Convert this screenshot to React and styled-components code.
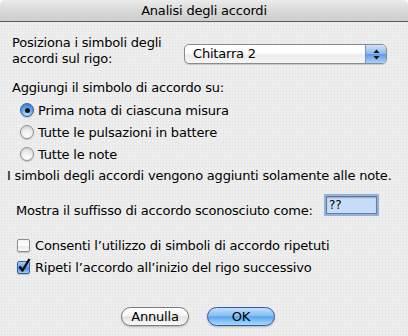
import styled, { createGlobalStyle } from "styled-components"

const GlobalStyle = createGlobalStyle`
    html, body {
        margin: 0;
        padding: 0;
        background: #ffffff;
    }
    body {
        font-family: "DejaVu Sans", "Liberation Sans", sans-serif;
        font-size: 13px;
        letter-spacing: -0.2px;
        color: #000;
    }
`

export default function App() {
    return (
        <>
            <GlobalStyle />
            <Window>
                <TitleBar>Analisi degli accordi</TitleBar>
                <Body>
                    <PositionRow>
                        <PositionLabel>
                            Posiziona i simboli degli<br />accordi sul rigo:
                        </PositionLabel>
                        <Popup>
                            <PopupText>Chitarra 2</PopupText>
                            <PopupArrows>
                                <svg width="7" height="11" viewBox="0 0 7 11">
                                    <path d="M3.5 0.5 L6.5 4 L0.5 4 Z" fill="#111" />
                                    <path d="M0.5 7 L6.5 7 L3.5 10.5 Z" fill="#111" />
                                </svg>
                            </PopupArrows>
                        </Popup>
                    </PositionRow>

                    <SectionLabel>Aggiungi il simbolo di accordo su:</SectionLabel>

                    <RadioGroup>
                        <OptionRow>
                            <Radio $checked />
                            Prima nota di ciascuna misura
                        </OptionRow>
                        <OptionRow>
                            <Radio />
                            Tutte le pulsazioni in battere
                        </OptionRow>
                        <OptionRow>
                            <Radio />
                            Tutte le note
                        </OptionRow>
                    </RadioGroup>

                    <Note>I simboli degli accordi vengono aggiunti solamente alle note.</Note>

                    <SuffixRow>
                        <SuffixLabel>Mostra il suffisso di accordo sconosciuto come:</SuffixLabel>
                        <SuffixField>??</SuffixField>
                    </SuffixRow>

                    <CheckGroup>
                        <CheckRow>
                            <Checkbox />
                            Consenti l’utilizzo di simboli di accordo ripetuti
                        </CheckRow>
                        <CheckRow>
                            <Checkbox $checked>
                                <CheckMark width="13" height="15" viewBox="0 0 13 15">
                                    <path d="M1.5 8.5 L4.5 12.5 L11.5 1" stroke="#0a0a0a" strokeWidth="2.4" fill="none" strokeLinejoin="round" />
                                </CheckMark>
                            </Checkbox>
                            Ripeti l’accordo all’inizio del rigo successivo
                        </CheckRow>
                    </CheckGroup>

                    <ButtonRow>
                        <Button>Annulla</Button>
                        <Button $primary>OK</Button>
                    </ButtonRow>
                </Body>
            </Window>
        </>
    )
}

const Window = styled.div`
    width: 408px;
    height: 336px;
    border-radius: 5px 5px 0 0;
    overflow: hidden;
    display: flex;
    flex-direction: column;
    background-color: #ededed;
    background-image: radial-gradient(#e0e0e0 0.7px, transparent 0.8px);
    background-size: 3px 3px;
`
const TitleBar = styled.div`
    height: 21px;
    flex-shrink: 0;
    display: flex;
    align-items: center;
    justify-content: center;
    background: linear-gradient(#ececec, #d9d9d9 50%, #cdcdcd);
    border-bottom: 1px solid #5c5c5c;
    font-size: 13px;
    color: #000;
`
const Body = styled.div`
    display: flex;
    flex-direction: column;
    padding-top: 13px;
`
const PositionRow = styled.div`
    display: flex;
    align-items: flex-start;
    height: 32px;
`
const PositionLabel = styled.div`
    width: 184px;
    padding-left: 12px;
    box-sizing: border-box;
    line-height: 16px;
    white-space: nowrap;
`
const Popup = styled.div`
    margin-top: 9px;
    width: 203px;
    height: 20px;
    box-sizing: border-box;
    border: 1px solid #8c8c8c;
    border-radius: 5px;
    display: flex;
    overflow: hidden;
    background: linear-gradient(#ffffff, #fbfbfb 50%, #ececec 55%, #f6f6f6);
    box-shadow: 0 1px 1px rgba(0, 0, 0, 0.15);
`
const PopupText = styled.div`
    flex: 1;
    padding-left: 8px;
    line-height: 18px;
`
const PopupArrows = styled.div`
    width: 20px;
    display: flex;
    align-items: center;
    justify-content: center;
    border-left: 1px solid #7494c8;
    background: linear-gradient(#cfe3fb, #8dbaf0 48%, #5f9be6 52%, #a8d2fb);
`
const SectionLabel = styled.div`
    margin-top: 13px;
    padding-left: 12px;
    line-height: 16px;
`
const RadioGroup = styled.div`
    margin-top: 3px;
    display: flex;
    flex-direction: column;
`
const OptionRow = styled.div`
    height: 22px;
    display: flex;
    align-items: center;
    padding-left: 20px;
    gap: 4px;
`
const Radio = styled.span`
    position: relative;
    width: 14px;
    height: 14px;
    box-sizing: border-box;
    border-radius: 50%;
    border: 1px solid ${p => (p.$checked ? "#3a5f9a" : "#8e8e8e")};
    background: ${p =>
        p.$checked
            ? "radial-gradient(circle at 50% 80%, #bfe2ff, #5b9fe8 55%, #2d6ccc)"
            : "radial-gradient(circle at 50% 85%, #ffffff, #eeeeee 50%, #c9c9c9)"};
    box-shadow: 0 1px 1px rgba(0, 0, 0, 0.18);
    &::after {
        content: "";
        display: ${p => (p.$checked ? "block" : "none")};
        position: absolute;
        left: 3.5px;
        top: 3.5px;
        width: 5px;
        height: 5px;
        border-radius: 50%;
        background: #111;
    }
`
const Note = styled.div`
    margin-top: 3px;
    padding-left: 7px;
    line-height: 16px;
`
const SuffixRow = styled.div`
    margin-top: 12px;
    display: flex;
    align-items: flex-start;
`
const SuffixLabel = styled.div`
    margin-top: 7px;
    padding-left: 16px;
    width: 326px;
    box-sizing: border-box;
    line-height: 16px;
    white-space: nowrap;
`
const SuffixField = styled.div`
    width: 51px;
    height: 18px;
    box-sizing: border-box;
    border: 1px solid #6f7c8e;
    background: #c6dcfb;
    box-shadow: 0 0 0 2px #8fb2e0, inset 0 1px 1px rgba(0, 0, 0, 0.25);
    font-size: 12px;
    line-height: 16px;
    padding-left: 2px;
`
const CheckGroup = styled.div`
    margin-top: 15px;
    display: flex;
    flex-direction: column;
`
const CheckRow = styled.div`
    height: 22px;
    display: flex;
    align-items: center;
    padding-left: 17px;
    gap: 5px;
`
const Checkbox = styled.span`
    position: relative;
    width: 13px;
    height: 13px;
    box-sizing: border-box;
    border-radius: 2px;
    border: 1px solid ${p => (p.$checked ? "#3a5f9a" : "#8e8e8e")};
    background: ${p =>
        p.$checked
            ? "linear-gradient(#a9d0fa, #5e9de6 50%, #3f86e0 55%, #9fd0ff)"
            : "linear-gradient(#f4f4f4, #ffffff 50%, #e9e9e9 55%, #fbfbfb)"};
    box-shadow: 0 1px 1px rgba(0, 0, 0, 0.18);
`
const CheckMark = styled.svg`
    position: absolute;
    left: 0px;
    top: -4px;
`
const ButtonRow = styled.div`
    margin-top: 29px;
    display: flex;
    justify-content: center;
    gap: 18px;
    padding-right: 12px;
`
const Button = styled.div`
    width: 68px;
    height: 19px;
    box-sizing: border-box;
    border-radius: 10px;
    display: flex;
    align-items: center;
    justify-content: center;
    border: 1px solid ${p => (p.$primary ? "#3a55a0" : "#7c7c7c")};
    background: ${p =>
        p.$primary
            ? "linear-gradient(#c2e0fd, #86bff5 45%, #5aa6f0 52%, #a6dcff)"
            : "linear-gradient(#ffffff, #f6f6f6 45%, #e2e2e2 52%, #fafafa)"};
    box-shadow: 0 1px 2px rgba(0, 0, 0, 0.25);
    color: #000;
`
